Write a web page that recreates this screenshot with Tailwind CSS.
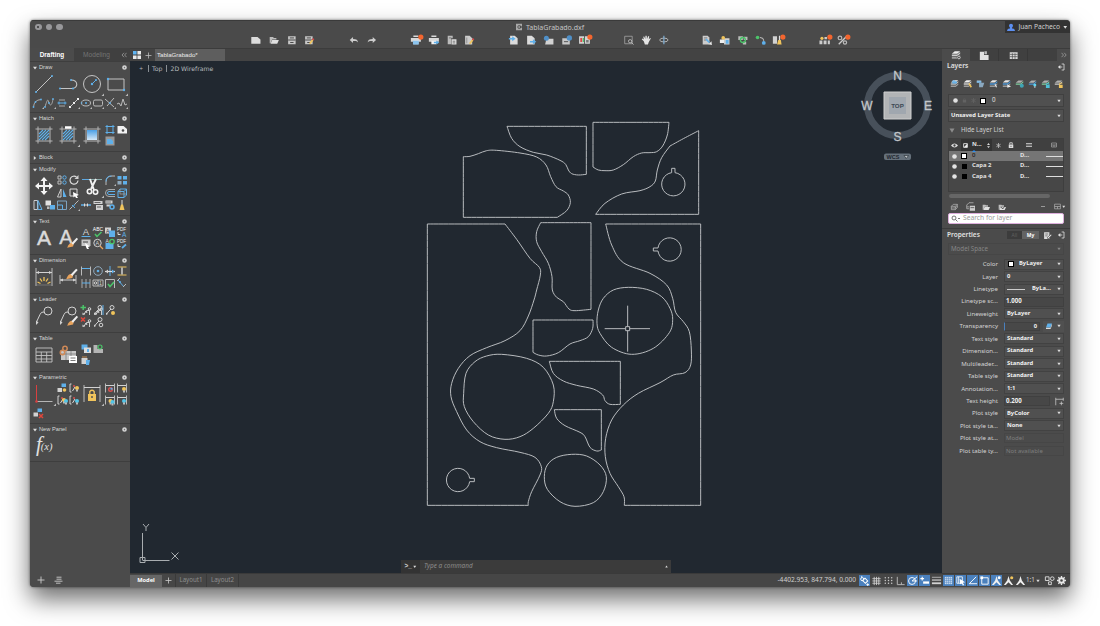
<!DOCTYPE html>
<html lang="en">
<head>
<meta charset="utf-8">
<title>TablaGrabado.dxf</title>
<script src="https://cdn.jsdelivr.net/npm/@tailwindcss/browser@4"></script>
</head>
<body class="w-[1100px] h-[626px] overflow-hidden bg-white pt-[20px] pl-[30px] font-['Liberation_Sans',sans-serif] text-[#d0d0d0]">
<div class="w-[1040px] h-[567px] flex flex-col rounded-[4px] overflow-hidden bg-[#4a4a4a] shadow-[0_12px_24px_rgba(0,0,0,0.58),0_0_3px_rgba(0,0,0,0.55)]">

  <!-- title bar -->
  <header class="h-[28px] shrink-0 flex flex-col border-t border-[#3a3a3a]">
    <div class="h-[12px] flex items-center justify-between">
      <div class="w-[480px] flex gap-[4px] pl-[5px]">
        <span class="size-[6.6px] rounded-full bg-[#98989b] flex items-center justify-center"><span class="size-[2px] rounded-full bg-[#333]"></span></span>
        <span class="size-[6.6px] rounded-full bg-[#98989b]"></span>
        <span class="size-[6.6px] rounded-full bg-[#98989b]"></span>
      </div>
      <div class="flex grow items-center gap-[3px] pl-[5px] font-['Noto_Sans',sans-serif] text-[7px] leading-none text-[#c4c4c4]">
        <svg data-i="doc" class="size-[8px]" viewBox="0 0 12 12"></svg><span>TablaGrabado.dxf</span>
      </div>
      <div class="w-[65px] h-[12px] bg-[#333] flex items-center justify-center gap-[3px] font-['Noto_Sans',sans-serif] text-[6.7px] leading-none text-[#cfcfcf]">
        <svg data-i="user" class="size-[8px]" viewBox="0 0 12 12"></svg><span>Juan Pacheco</span>
        <svg data-i="caret" class="size-[4.500px]" viewBox="0 0 12 12"></svg>
      </div>
    </div>
    <div class="h-[13px] flex items-center pl-[217.1px]">
      <div class="flex mr-[27px]">
        <svg data-i="new" class="w-[17.75px] h-[10px]" viewBox="0 0 12 12"></svg><svg data-i="open" class="w-[17.75px] h-[10px]" viewBox="0 0 12 12"></svg><svg data-i="save" class="w-[17.75px] h-[10px]" viewBox="0 0 12 12"></svg><svg data-i="saveas" class="w-[17.75px] h-[10px]" viewBox="0 0 12 12"></svg>
      </div>
      <div class="flex mr-[26.5px]">
        <svg data-i="undo" class="w-[17.75px] h-[10px]" viewBox="0 0 12 12"></svg><svg data-i="redo" class="w-[17.75px] h-[10px]" viewBox="0 0 12 12"></svg>
      </div>
      <div class="flex mr-[26.5px]">
        <svg data-i="printdot" class="w-[17.75px] h-[10px]" viewBox="0 0 12 12"></svg><svg data-i="printarrow" class="w-[17.75px] h-[10px]" viewBox="0 0 12 12"></svg><svg data-i="pages" class="w-[17.75px] h-[10px]" viewBox="0 0 12 12"></svg><svg data-i="pagepen" class="w-[17.75px] h-[10px]" viewBox="0 0 12 12"></svg>
      </div>
      <div class="flex mr-[26.2px]">
        <svg data-i="import" class="w-[17.75px] h-[10px]" viewBox="0 0 12 12"></svg><svg data-i="export" class="w-[17.75px] h-[10px]" viewBox="0 0 12 12"></svg><svg data-i="cloudopen" class="w-[17.75px] h-[10px]" viewBox="0 0 12 12"></svg><svg data-i="cloudsave" class="w-[17.75px] h-[10px]" viewBox="0 0 12 12"></svg><svg data-i="compare" class="w-[17.75px] h-[10px]" viewBox="0 0 12 12"></svg>
      </div>
      <div class="flex mr-[25.7px]">
        <svg data-i="zoom" class="w-[17.75px] h-[10px]" viewBox="0 0 12 12"></svg><svg data-i="hand" class="w-[17.75px] h-[10px]" viewBox="0 0 12 12"></svg><svg data-i="orbit" class="w-[17.75px] h-[10px]" viewBox="0 0 12 12"></svg>
      </div>
      <div class="flex mr-[28.7px]">
        <svg data-i="xref" class="w-[17.75px] h-[10px]" viewBox="0 0 12 12"></svg><svg data-i="sun" class="w-[17.75px] h-[10px]" viewBox="0 0 12 12"></svg><svg data-i="refresh" class="w-[17.75px] h-[10px]" viewBox="0 0 12 12"></svg><svg data-i="nodes" class="w-[17.75px] h-[10px]" viewBox="0 0 12 12"></svg><svg data-i="brushdot" class="w-[17.75px] h-[10px]" viewBox="0 0 12 12"></svg>
      </div>
      <div class="flex">
        <svg data-i="blockdot" class="w-[17.75px] h-[10px]" viewBox="0 0 12 12"></svg><svg data-i="linkdot" class="w-[17.75px] h-[10px]" viewBox="0 0 12 12"></svg>
      </div>
    </div>
  </header>

  <div class="flex grow min-h-0">
    <!-- tool sets -->
    <aside class="w-[100px] shrink-0 flex flex-col bg-[#4b4b4b] text-[5.7px] leading-none">
      <div class="h-[13px] shrink-0 flex items-center bg-[#404040] text-[6.6px]">
        <span class="w-[44px] h-full flex items-center justify-center bg-[#4b4b4b] font-bold text-white text-[6.4px] pt-px">Drafting</span>
        <span class="w-[45px] text-center text-[#747474] pt-px">Modeling</span>
        <svg class="size-[6px] ml-[2px]" viewBox="0 0 6 6" fill="none" stroke="#aaa" stroke-width=".7"><path d="M3 .8 1 3l2 2.200M5.600.8 3.600 3l2 2.200"/></svg>
      </div>
      <section data-title="Draw" class="h-[51px] shrink-0">
        <div class="grid grid-cols-[repeat(8,12px)] auto-rows-[12px] pl-[2px]">
          <svg data-i="Line" class="col-span-2 row-span-2 size-6" viewBox="0 0 24 24"></svg><svg data-i="Pline" class="col-span-2 row-span-2 size-6" viewBox="0 0 24 24"></svg><svg data-i="Circle" class="col-span-2 row-span-2 size-6" viewBox="0 0 24 24"></svg><svg data-i="Rect" class="col-span-2 row-span-2 size-6" viewBox="0 0 24 24"></svg>
          <svg data-i="arc" class="size-3 mt-[1px]" viewBox="0 0 12 12"></svg><svg data-i="spline" class="size-3 mt-[1px]" viewBox="0 0 12 12"></svg><svg data-i="mline" class="size-3 mt-[1px]" viewBox="0 0 12 12"></svg><svg data-i="ray" class="size-3 mt-[1px]" viewBox="0 0 12 12"></svg><svg data-i="ellipse" class="size-3 mt-[1px]" viewBox="0 0 12 12"></svg><svg data-i="rrect" class="size-3 mt-[1px]" viewBox="0 0 12 12"></svg><svg data-i="xline" class="size-3 mt-[1px]" viewBox="0 0 12 12"></svg><svg data-i="zig" class="size-3 mt-[1px]" viewBox="0 0 12 12"></svg>
        </div>
      </section>
      <section data-title="Hatch" class="h-[39px] shrink-0">
        <div class="grid grid-cols-[repeat(8,12px)] auto-rows-[12px] pl-[2px]">
          <svg data-i="Hatch" class="col-span-2 row-span-2 size-6" viewBox="0 0 24 24"></svg><svg data-i="HatchEdit" class="col-span-2 row-span-2 size-6" viewBox="0 0 24 24"></svg><svg data-i="Gradient" class="col-span-2 row-span-2 size-6" viewBox="0 0 24 24"></svg>
          <svg data-i="boundary" class="size-3" viewBox="0 0 12 12"></svg><svg data-i="wipe" class="size-3" viewBox="0 0 12 12"></svg><svg data-i="region" class="size-3" viewBox="0 0 12 12"></svg>
        </div>
      </section>
      <section data-title="Block" data-closed class="h-[12px] shrink-0"></section>
      <section data-title="Modify" class="h-[52px] shrink-0">
        <div class="grid grid-cols-[repeat(8,12px)] auto-rows-[12.5px] pl-[2px]">
          <svg data-i="Move" class="col-span-2 row-span-2 size-6" viewBox="0 0 24 24"></svg>
          <svg data-i="copy" class="size-3" viewBox="0 0 12 12"></svg><svg data-i="rotate" class="size-3" viewBox="0 0 12 12"></svg>
          <svg data-i="Trim" class="col-span-2 row-span-2 size-6" viewBox="0 0 24 24"></svg>
          <svg data-i="fillet" class="size-3" viewBox="0 0 12 12"></svg><svg data-i="array" class="size-3" viewBox="0 0 12 12"></svg>
          <svg data-i="mirror" class="size-3" viewBox="0 0 12 12"></svg><svg data-i="select" class="size-3" viewBox="0 0 12 12"></svg><svg data-i="offset" class="size-3" viewBox="0 0 12 12"></svg><svg data-i="box" class="size-3" viewBox="0 0 12 12"></svg>
          <svg data-i="stretch" class="size-3" viewBox="0 0 12 12"></svg><svg data-i="pair" class="size-3" viewBox="0 0 12 12"></svg><svg data-i="scale" class="size-3" viewBox="0 0 12 12"></svg><svg data-i="brk" class="size-3" viewBox="0 0 12 12"></svg><svg data-i="join" class="size-3" viewBox="0 0 12 12"></svg><svg data-i="props" class="size-3" viewBox="0 0 12 12"></svg><svg data-i="props2" class="size-3" viewBox="0 0 12 12"></svg><svg data-i="broom" class="size-3" viewBox="0 0 12 12"></svg>
        </div>
      </section>
      <section data-title="Text" class="h-[39px] shrink-0">
        <div class="grid grid-cols-[repeat(8,12px)] auto-rows-[12px] pl-[2px]">
          <svg data-i="TextA" class="col-span-2 row-span-2 size-6" viewBox="0 0 24 24"></svg><svg data-i="TextB" class="col-span-2 row-span-2 size-6" viewBox="0 0 24 24"></svg>
          <svg data-i="ta" class="size-3" viewBox="0 0 12 12"></svg><svg data-i="abc" class="size-3" viewBox="0 0 12 12"></svg><svg data-i="ttop" class="size-3" viewBox="0 0 12 12"></svg><svg data-i="pdfa" class="size-3" viewBox="0 0 12 12"></svg>
          <svg data-i="tfind" class="size-3" viewBox="0 0 12 12"></svg><svg data-i="mag" class="size-3" viewBox="0 0 12 12"></svg><svg data-i="tupd" class="size-3" viewBox="0 0 12 12"></svg><svg data-i="pdfb" class="size-3" viewBox="0 0 12 12"></svg>
        </div>
      </section>
      <section data-title="Dimension" class="h-[39px] shrink-0">
        <div class="grid grid-cols-[repeat(8,12px)] auto-rows-[12px] pl-[2px]">
          <svg data-i="DimA" class="col-span-2 row-span-2 size-6" viewBox="0 0 24 24"></svg><svg data-i="DimB" class="col-span-2 row-span-2 size-6" viewBox="0 0 24 24"></svg>
          <svg data-i="dlin" class="size-3" viewBox="0 0 12 12"></svg><svg data-i="dcir" class="size-3" viewBox="0 0 12 12"></svg><svg data-i="dbrk" class="size-3" viewBox="0 0 12 12"></svg><svg data-i="dspc" class="size-3" viewBox="0 0 12 12"></svg>
          <svg data-i="dcon" class="size-3" viewBox="0 0 12 12"></svg><svg data-i="dtol" class="size-3" viewBox="0 0 12 12"></svg><svg data-i="dchk" class="size-3" viewBox="0 0 12 12"></svg><svg data-i="dobl" class="size-3" viewBox="0 0 12 12"></svg>
        </div>
      </section>
      <section data-title="Leader" class="h-[39px] shrink-0">
        <div class="grid grid-cols-[repeat(8,12px)] auto-rows-[12px] pl-[2px]">
          <svg data-i="LeadA" class="col-span-2 row-span-2 size-6" viewBox="0 0 24 24"></svg><svg data-i="LeadB" class="col-span-2 row-span-2 size-6" viewBox="0 0 24 24"></svg>
          <svg data-i="ladd" class="size-3" viewBox="0 0 12 12"></svg><svg data-i="lal" class="size-3" viewBox="0 0 12 12"></svg><svg data-i="lst" class="size-3 col-span-2" viewBox="0 0 12 12"></svg>
          <svg data-i="lrem" class="size-3" viewBox="0 0 12 12"></svg><svg data-i="lcol" class="size-3" viewBox="0 0 12 12"></svg>
        </div>
      </section>
      <section data-title="Table" class="h-[39px] shrink-0">
        <div class="grid grid-cols-[repeat(8,12px)] auto-rows-[12px] pl-[2px]">
          <svg data-i="TabA" class="col-span-2 row-span-2 size-6" viewBox="0 0 24 24"></svg><svg data-i="TabB" class="col-span-2 row-span-2 size-6" viewBox="0 0 24 24"></svg>
          <svg data-i="tb1" class="size-3" viewBox="0 0 12 12"></svg><svg data-i="tb2" class="size-3 col-span-3" viewBox="0 0 12 12"></svg><svg data-i="tb3" class="size-3" viewBox="0 0 12 12"></svg>
        </div>
      </section>
      <section data-title="Parametric" class="h-[52px] shrink-0">
        <div class="grid grid-cols-[repeat(8,12px)] auto-rows-[12.4px] pl-[2px]">
          <svg data-i="ParA" class="col-span-2 row-span-2 size-6" viewBox="0 0 24 24"></svg>
          <svg data-i="p1" class="size-3" viewBox="0 0 12 12"></svg><svg data-i="p2" class="size-3" viewBox="0 0 12 12"></svg>
          <svg data-i="ParB" class="col-span-2 row-span-2 size-6" viewBox="0 0 24 24"></svg>
          <svg data-i="p5" class="size-3" viewBox="0 0 12 12"></svg><svg data-i="p6" class="size-3" viewBox="0 0 12 12"></svg>
          <svg data-i="p3" class="size-3" viewBox="0 0 12 12"></svg><svg data-i="p4" class="size-3" viewBox="0 0 12 12"></svg><svg data-i="p7" class="size-3" viewBox="0 0 12 12"></svg><svg data-i="p8" class="size-3" viewBox="0 0 12 12"></svg>
          <svg data-i="p9" class="size-3" viewBox="0 0 12 12"></svg>
        </div>
      </section>
      <section data-title="New Panel" class="h-[39px] shrink-0 border-b border-[#3e3e3e]">
        <div class="pl-[6px] font-['Liberation_Serif',serif] italic text-[#e0e0e0] flex items-end"><span class="text-[21px] leading-[20px]">f</span><span class="text-[10.500px] leading-[15px] -ml-[1px]">(x)</span></div>
      </section>
      <div class="mt-auto h-[14px] flex items-center gap-[9px] pl-[7px]">
        <svg class="size-2" viewBox="0 0 8 8" stroke="#ccc" stroke-width=".9"><path d="M4 .5v7M.5 4h7"/></svg>
        <svg class="w-[9px] h-2" viewBox="0 0 9 8" fill="none" stroke="#ccc" stroke-width=".9"><path d="M2.500 1.200h5M2.500 3.200h5M.5 5.200h8M2 7.200h4.500"/></svg>
      </div>
    </aside>

    <div class="flex flex-col grow min-w-0">
      <div class="flex grow min-h-0">
        <!-- drawing area -->
        <main class="w-[812px] flex flex-col">
          <div class="h-[13px] shrink-0 flex items-center bg-[#434343] border-t border-[#3c3c3c]">
            <svg class="size-[8px] ml-[3px]" viewBox="0 0 8 8"><path fill="#5fb4f2" d="M0 0h3.600v3.600H0z"/><path fill="#e8e8e8" d="M4.400 0H8v3.600H4.400zM0 4.400h3.600V8H0zM4.400 4.400H8V8H4.400z"/></svg>
            <svg class="size-[7px] ml-[4px]" viewBox="0 0 7 7" stroke="#bbb" stroke-width=".8"><path d="M3.500.5v6M.5 3.500h6"/></svg>
            <div class="ml-[3px] w-[70px] h-full bg-[#5e5e5e] flex items-center pl-[2px] pt-px text-[6.100px] leading-none text-[#ececec]">TablaGrabado*</div>
          </div>
          <div class="relative grow bg-[#212830]">
            <div class="absolute left-[9px] top-[3px] z-10 flex items-center gap-[4px] text-[6.200px] leading-[9px] text-[#b4b8bc] font-['DejaVu_Sans',sans-serif]">
              <span class="text-[5px] w-[2px]">+</span><span class="w-px h-[7px] bg-[#8a8f94] ml-[3px]"></span><span class="-ml-[1px]">Top</span><span class="w-px h-[7px] bg-[#8a8f94]"></span><span class="-ml-[1px]">2D Wireframe</span>
            </div>
            <svg class="w-[812px] h-[512px] block" viewBox="130 61 812 512" fill="none">
              <g id="drawing" transform="translate(420 110) scale(.33333)" stroke="#b9bcbf" stroke-width="3"></g>
              <!-- UCS icon -->
              <g stroke="#a9adb0" stroke-width="1"><path d="M142.500 533v27M142.500 560.500h27"/><path d="M140 557.500h5v5h-5zM143 524l3 3.500v3.500M149 524l-3 3.500M171.500 552.500l7 7M178.500 552.500l-7 7"/></g>
              <!-- compass -->
              <circle cx="897.500" cy="105.500" r="30" stroke="#47505a" stroke-width="7"/>
              <path fill="#b2b4b6" stroke="#cfcfcf" d="M884 92h27v27h-27z"/><path fill="#a0a7af" d="M889 97h17v17h-17z"/>
              <g font-family="Liberation Sans, sans-serif" text-anchor="middle" fill="#c3c7ca">
                <g font-size="12" stroke="#c3c7ca" stroke-width=".3"><text x="897.500" y="79.500">N</text><text x="897.500" y="140.500">S</text><text x="867" y="110">W</text><text x="928" y="110">E</text></g>
                <text x="897.500" y="107.800" font-size="6.200" fill="#3c4753" font-weight="bold">TOP</text>
                <rect x="884" y="153.500" width="27" height="6.500" rx="2" fill="#66717b"/>
                <text x="893" y="159" font-size="5.500" fill="#1e262e" font-weight="bold">WCS</text>
                <path d="M904 155.500h4.500l-2.250 3z" stroke="#1e262e" stroke-width=".6"/>
              </g>
            </svg>
            <div class="absolute left-[271px] top-[499px] w-[270px] h-[13px] bg-[#3b3b3b] flex items-center text-[6.400px] leading-none text-[#8c8c8c]">
              <span class="w-[19px] h-full bg-[#333] flex items-center justify-center gap-[1px] font-bold text-[6.500px] text-[#ccc]">&gt;_<svg data-i="caret" class="size-[3.500px]" viewBox="0 0 12 12"></svg></span>
              <span class="italic pl-[4px] font-['Noto_Sans',sans-serif]">Type a command</span>
              <svg data-i="caret" class="ml-auto mr-[3px] size-[3px] rotate-180" viewBox="0 0 12 12"></svg>
            </div>
          </div>
        </main>

        <!-- layers and properties -->
        <aside class="w-[128px] shrink-0 flex flex-col bg-[#4b4b4b] font-['Noto_Sans',sans-serif] text-[5.900px] leading-none text-[#e0e0e0]">
          <div class="h-[13px] shrink-0 flex items-center bg-[#404040] border-t border-[#3c3c3c]">
            <span class="w-[28px] h-full flex items-center justify-center bg-[#4b4b4b]"><svg data-i="tlayers" class="size-[10px]" viewBox="0 0 12 12"></svg></span>
            <span class="w-[29px] h-full flex items-center justify-center border-r border-[#383838]"><svg data-i="tblocks" class="size-[10px]" viewBox="0 0 12 12"></svg></span>
            <span class="w-[29px] h-full flex items-center justify-center border-r border-[#383838]"><svg data-i="tgrid" class="size-[9px]" viewBox="0 0 12 12"></svg></span>
            <span class="ml-auto w-[13px] h-full flex items-center justify-center bg-[#4b4b4b]"><svg class="size-[6px]" viewBox="0 0 6 6" fill="none" stroke="#aaa" stroke-width=".7"><path d="M.5.8 2.500 3l-2 2.200M3.200.8l2 2.200-2 2.200"/></svg></span>
          </div>
          <div class="h-[11px] shrink-0 flex items-center justify-between pl-[5px] pr-[5px]"><span class="text-[6.700px] font-semibold">Layers</span><svg data-i="dock" class="size-[8px]" viewBox="0 0 12 12"></svg></div>
          <div class="h-[22px] shrink-0 flex items-center pl-[5.500px]">
            <svg data-i="ly1" class="w-[13.070px] h-[9px]" viewBox="0 0 12 12"></svg><svg data-i="ly2" class="w-[13.070px] h-[9px]" viewBox="0 0 12 12"></svg><svg data-i="ly3" class="w-[13.070px] h-[9px]" viewBox="0 0 12 12"></svg><svg data-i="ly4" class="w-[13.070px] h-[9px]" viewBox="0 0 12 12"></svg><svg data-i="ly5" class="w-[13.070px] h-[9px]" viewBox="0 0 12 12"></svg><svg data-i="ly6" class="w-[13.070px] h-[9px]" viewBox="0 0 12 12"></svg><svg data-i="ly7" class="w-[13.070px] h-[9px]" viewBox="0 0 12 12"></svg><svg data-i="ly8" class="w-[13.070px] h-[9px]" viewBox="0 0 12 12"></svg><svg data-i="ly9" class="w-[13.070px] h-[9px]" viewBox="0 0 12 12"></svg>
          </div>
          <div class="mx-[6px] h-[13px] shrink-0 flex items-center border border-[#404040] bg-[#505050] px-[2px]">
            <svg data-i="disc" class="size-[5px] ml-[2px]" viewBox="0 0 12 12"></svg><svg data-i="lockdim" class="size-[5px] ml-[4px]" viewBox="0 0 12 12"></svg><svg data-i="snowdim" class="size-[5px] ml-[4px]" viewBox="0 0 12 12"></svg>
            <span class="size-[6px] bg-white border border-black ml-[4px]"></span><span class="ml-[6px] text-[6.200px]">0</span>
            <svg data-i="caret" class="ml-auto size-[4px]" viewBox="0 0 12 12"></svg>
          </div>
          <div class="mx-[6px] mt-[2px] h-[13px] shrink-0 flex items-center border border-[#404040] bg-[#505050] px-[2px] font-bold text-[5.800px] text-[#f0f0f0]">
            <span>Unsaved Layer State</span><svg data-i="caret" class="ml-auto size-[4px]" viewBox="0 0 12 12"></svg>
          </div>
          <div class="h-[16px] shrink-0 flex items-center pl-[7px] text-[6.200px] text-[#d0d0d0]">
            <svg class="w-[6px] h-[5px] mr-[6px]" viewBox="0 0 6 5"><path fill="#8c8c8c" d="M.5.5h5L3 4.800z"/></svg>Hide Layer List
          </div>
          <div class="mx-[6px] h-[54px] shrink-0 flex flex-col bg-[#474747] border border-[#3e3e3e] font-bold">
            <div class="h-[12px] shrink-0 flex items-center bg-[#404040]">
              <svg data-i="eye" class="size-[7px] ml-[2px]" viewBox="0 0 12 12"></svg>
              <span class="ml-[3px] w-[31px] h-full bg-[#333] flex items-center gap-[4px] pl-[2px] relative"><svg data-i="half" class="size-[5px]" viewBox="0 0 12 12"></svg><span>N...</span><svg data-i="sort" class="size-[5px]" viewBox="0 0 12 12"></svg><span class="absolute left-[11px] bottom-[-1px] border-x-[2px] border-b-[2px] border-x-transparent border-b-[#2a8df0]"></span></span>
              <svg data-i="snow" class="size-[5px] ml-[4px]" viewBox="0 0 12 12"></svg><svg data-i="lock" class="size-[6px] ml-[7px]" viewBox="0 0 12 12"></svg>
              <svg data-i="bars" class="size-[6px] ml-[12px]" viewBox="0 0 12 12"></svg><svg data-i="barsdim" class="size-[6px] ml-[19px]" viewBox="0 0 12 12"></svg>
            </div>
            <div class="h-[10.200px] shrink-0 flex items-center bg-[#757575]"><svg data-i="disc" class="size-[5px] ml-[3px]" viewBox="0 0 12 12"></svg><span class="size-[6px] bg-white border border-black ml-[4px]"></span><span class="ml-[5px] w-[48px] font-normal text-black">0</span><span>D...</span><span class="ml-auto w-[17px] h-px bg-[#ddd]"></span></div>
            <div class="h-[10.200px] shrink-0 flex items-center"><svg data-i="disc" class="size-[5px] ml-[3px]" viewBox="0 0 12 12"></svg><span class="size-[5px] bg-black ml-[5px]"></span><span class="ml-[5px] w-[48px]">Capa 2</span><span>D...</span><span class="ml-auto w-[17px] h-px bg-[#ddd]"></span></div>
            <div class="h-[10.200px] shrink-0 flex items-center"><svg data-i="disc" class="size-[5px] ml-[3px]" viewBox="0 0 12 12"></svg><span class="size-[5px] bg-black ml-[5px]"></span><span class="ml-[5px] w-[48px]">Capa 4</span><span>D...</span><span class="ml-auto w-[17px] h-px bg-[#ddd]"></span></div>
          </div>
          <div class="ml-[6.500px] mt-[2px] w-[101px] h-[4px] shrink-0 rounded-full bg-[#666]"></div>
          <div class="h-[15px] shrink-0 flex items-center pt-[2px] pl-[8px] pr-[3px]">
            <svg data-i="slayers" class="size-[8px]" viewBox="0 0 12 12"></svg><svg data-i="lygrp" class="size-[9px] ml-[8px]" viewBox="0 0 12 12"></svg><svg data-i="open" class="size-[8px] ml-[7px]" viewBox="0 0 12 12"></svg><svg data-i="folderv" class="size-[8px] ml-[8px]" viewBox="0 0 12 12"></svg>
            <span class="ml-auto w-[4px] h-px bg-[#999] mr-[9px]"></span><svg data-i="barsdim" class="size-[7px]" viewBox="0 0 12 12"></svg><svg data-i="caret" class="ml-[1px] mr-[2px] size-[3.500px]" viewBox="0 0 12 12"></svg>
          </div>
          <div class="mx-[6px] h-[11px] shrink-0 flex items-center rounded-[2px] bg-white border border-[#dcaedb] px-[2px] text-[6.700px] text-[#9a9a9a]">
            <svg class="w-[10px] h-[7px]" viewBox="0 0 10 7" fill="none" stroke="#555" stroke-width=".8"><circle cx="3" cy="3" r="2"/><path d="m4.500 4.500 2 2M7 3l1 1 1-1"/></svg><span class="ml-[2px]">Search for layer</span>
          </div>
          <div class="mt-[4px] h-[13px] shrink-0 flex items-center border-t border-[#3c3c3c] pl-[5px] pr-[5px]">
            <span class="text-[6.500px] font-semibold">Properties</span>
            <span class="ml-auto w-[15px] h-[8px] bg-[#3c3c3c] text-[#606060] text-center text-[5px] leading-[8px]">All</span><span class="w-[17px] h-[8px] bg-[#636363] text-white text-center text-[5px] leading-[8px] font-bold">My</span>
            <svg data-i="propedit" class="size-[9px] ml-[4px]" viewBox="0 0 12 12"></svg><svg data-i="dock" class="size-[8px] ml-[5px]" viewBox="0 0 12 12"></svg>
          </div>
          <div class="mx-[6px] mt-[2px] h-[12px] shrink-0 flex items-center border border-[#464646] px-[2px] text-[6.200px] text-[#868686]"><span>Model Space</span><svg data-i="caretdim" class="ml-auto size-[4px]" viewBox="0 0 12 12"></svg></div>
          <div id="props" class="mt-[3px]"></div>
        </aside>
      </div>

      <!-- status bar -->
      <footer class="h-[14px] shrink-0 flex items-center bg-[#464646] border-t border-[#3a3a3a] font-['Noto_Sans',sans-serif] text-[6.200px] leading-none">
        <span class="w-[32px] h-[12px] flex items-center justify-center bg-[#666] font-bold text-white text-[5.700px]">Model</span>
        <svg class="size-[7px] ml-[3px]" viewBox="0 0 7 7" stroke="#ccc" stroke-width=".8"><path d="M3.500.5v6M.5 3.500h6"/></svg>
        <span class="ml-[3px] w-[32px] h-full border-x border-[#3a3a3a] flex items-center justify-center text-[#8e8e8e] pb-px">Layout1</span>
        <span class="w-[32px] h-full border-r border-[#3a3a3a] flex items-center justify-center text-[#8e8e8e] pb-px">Layout2</span>
        <span class="ml-auto mr-[2px] pb-px text-[6.600px] text-[#cfcfcf]">-4402.953, 847.794, 0.000</span>
        <svg data-i="s1" class="size-[11px] mx-[.5px] bg-[#4a80bd]" viewBox="0 0 12 12"></svg><svg data-i="s2" class="size-[11px] mx-[.5px]" viewBox="0 0 12 12"></svg><svg data-i="s3" class="size-[11px] mx-[.5px]" viewBox="0 0 12 12"></svg><svg data-i="s4" class="size-[11px] mx-[.5px]" viewBox="0 0 12 12"></svg><svg data-i="s5" class="size-[11px] mx-[.5px] bg-[#4a80bd]" viewBox="0 0 12 12"></svg><svg data-i="s6" class="size-[11px] mx-[.5px] bg-[#4a80bd]" viewBox="0 0 12 12"></svg><svg data-i="s7" class="size-[11px] mx-[.5px]" viewBox="0 0 12 12"></svg><svg data-i="s8" class="size-[11px] mx-[.5px] bg-[#4a80bd]" viewBox="0 0 12 12"></svg><svg data-i="s9" class="size-[11px] mx-[.5px] bg-[#4a80bd]" viewBox="0 0 12 12"></svg><svg data-i="s10" class="size-[11px] mx-[.5px] bg-[#4a80bd]" viewBox="0 0 12 12"></svg><svg data-i="s11" class="size-[11px] mx-[.5px] bg-[#4a80bd]" viewBox="0 0 12 12"></svg><svg data-i="s12" class="size-[11px] mx-[.5px] bg-[#4a80bd]" viewBox="0 0 12 12"></svg><svg data-i="s13" class="size-[11px] mx-[.5px]" viewBox="0 0 12 12"></svg><svg data-i="s14" class="size-[11px] mx-[.5px]" viewBox="0 0 12 12"></svg>
        <span class="w-[9px] text-[#cfcfcf]">1:1</span><svg data-i="caret" class="ml-[1px] size-[4px]" viewBox="0 0 12 12"></svg>
        <svg data-i="s15" class="size-[11px] ml-[4px]" viewBox="0 0 12 12"></svg><svg data-i="gear" class="size-[9px] ml-[2px] mr-[4px]" viewBox="0 0 12 12"></svg>
      </footer>
    </div>
  </div>
</div>

<script>
const W = '#d2d2d2', B = '#5fb0ea', Y = '#f0c45c', G = '#4cc46a';
const ln = (d, c = W, w = 1) => `<path d="${d}" fill="none" stroke="${c}" stroke-width="${w}"/>`;
const fl = (d, c = W) => `<path d="${d}" fill="${c}"/>`;
const ci = (x, y, r, c = W) => `<circle cx="${x}" cy="${y}" r="${r}" fill="${c}"/>`;
const ring = (x, y, r, c = W, w = 1) => `<circle cx="${x}" cy="${y}" r="${r}" fill="none" stroke="${c}" stroke-width="${w}"/>`;
const tx = (t, x, y, s, c = W, e = '') => `<text x="${x}" y="${y}" font-size="${s}" fill="${c}" font-family="Liberation Sans, sans-serif" ${e}>${t}</text>`;
const dot = ci(12, 2.500, 3.100, '#f4662f');
const more = fl('M24 24h-2.500l2.500-2.500z', '#bbb'), more2 = fl('M12 12h-2l2-2z', '#bbb');
const floppy = fl('M1.500 1.500h9v9.500h-9z', '#c8c8c8') + ln('M3.500 3.500h5M1.500 6h9M4 9h4', '#4b4b4b', 1.200);
const printer = fl('M3 .5h6v2H3zM0 3.500h12V8H0z', '#d8d8d8') + fl('M3 7h6v4H3z', '#f2f2f2');
const page = fl('M1.500 1h5.500l3.500 3v7.500h-9z', '#dcdcdc');
const folder = fl('M1 2.500h4l1 1h3v2H4L2 10H1z', '#bdbdbd') + fl('M4 6h8l-2 4.500H2z', '#e0e0e0');
const pen = ln('M7 10.500l3.500-4.500', Y, 2.200) + ln('M10.500 6l1.200-1.600', '#d94a4a', 2.200);
const layer = (a, b) => fl('M1 4.500 4.500 1.500H11L7.500 4.500z', a) + fl('M1 5.500h6.500L11 2.500v2L7.500 7.500H1z', b) + fl('M1 8.500h6.500L11 5.500v2L7.500 10.500H1z', '#9c9c9c');
const sheet = c => fl('M1 5 4.500 2H11L7.500 5z', '#b0b0b0') + fl('M1 6h6.500L11 3v1.500L7.500 7.500H1z', c);
const brush = (s = 1) => `<g transform="translate(${s > 1 ? 12 : 6} ${s > 1 ? 12 : 6}) scale(${s})">` + fl('M-.5 5.700C.8 2.500 2 2.500 3.500 3L3 5z', '#e8a35c') + ln('M2.500 3.500 5.500.2', '#eee', 1.200) + '</g>';
const bulb = (x, y, c) => ci(x, y, 2, c) + fl(`M${x - 1} ${y + 1.500}h2v2h-2z`, '#bbb');
const frame24 = ln('M3.500 6h17M3.500 18h17M6 3.500v17M18 3.500v17', '#b5b5b5');
const hatch = ln('M7 11l4-4M7 14l7-7M7 17l10-10M10 17l7-7M13 17l4-4', B, 1.100);
const leader = ring(8, 3.500, 2) + ln('M7 5 5 7 2.500 10') + fl('M2 11V8.500L4 10z');
const arrows = ln('M4 10.500l2-3.500 4-1M6 7l1 2', '#ddd') + ring(9.500, 5, 1.300) + ln('M9.500 6.500V11', '#ccc') + fl('M2.500 11V8.500L5 10.500z');
const dim = (c = W) => ln('M1.500 1.500v9M10.500 1.500v9', '#bbb') + ln('M2 3.500h8', c);
const cons = ln('M3.500 2H2v8h1.500') + ln('M4.500 9 7 5', '#ddd') + ci(6, 4, 1, '#d84f4f');
const comp = fl('M6 1 7.500 6 11 11H9L6 8 3 11H1L4.500 6z', '#eee');
const snow = c => ln('M6 0v12M1 3l10 6M11 3 1 9', c, 2);
const icons = {
  caret: fl('M1 2.500h10L6 10z', '#ddd'), caretdim: fl('M1 2.500h10L6 10z', '#888'), disc: ci(6, 6, 5.500, '#e2e2e2'),
  doc: fl('M1.500 1h9v10h-9z', '#a9a9a9') + ring(6.500, 6, 2.300, '#444', 1.200) + fl('M7 5h3v2H7z', '#444'),
  user: ci(6, 4, 3, '#5c8ff0') + fl('M4.500 6h3v3h-3zM0 12c0-3 3-4 6-4s6 1 6 4z', '#5c8ff0'),
  new: fl('M.5 2.500H8l3.500 3V10.500H.5z', '#dcdcdc'), open: folder, save: floppy, saveas: floppy + pen,
  undo: fl('M1 6l4-3.500v2.200c4 0 6 1.300 6 4.300C10 7.300 8 7 5 7.200V9.500z', '#ccc'),
  redo: fl('M11 6 7 2.500v2.200C3 4.700 1 6 1 9c1-1.700 3-2 6-1.800V9.500z', '#ccc'),
  printdot: printer + fl('M2.500 7h7v4.500h-7z', '#8cc4ee') + dot, printarrow: printer + ln('M6 9h4', B, 1.700) + fl('M9 6.500 12.500 9 9 11.500z', B),
  pages: fl('M1 1h6v3H5v7H1z', '#bbb') + fl('M5.500 5H11.500v6.500h-6z', '#ddd') + ln('M7 7.500h3M7 9.500h3', '#555', .8) + ln('M2.500 3.500h3', '#555', .8),
  pagepen: fl('M1.500 1h5.500l3 3v7.500h-8.500z', '#ccc') + ln('M3.500 3v7', '#777', .8) + pen,
  import: page + ln('M0 4.500h5', B, 1.700) + fl('M4 1.500 8 4.500 4 7.500z', B), export: page + ln('M5 8h4', B, 1.700) + fl('M8.500 5 12.500 8l-4 3z', B),
  cloudopen: fl('M3 4.500h8.500v7H1.500z') + ci(3, 4, 3, '#4f8fc7'), cloudsave: fl('M.5 4h9v7.500h-9z', '#c8c8c8') + ln('M2.500 8h5', '#555', 1.200) + ci(9, 3.500, 3.200, '#4f8fc7'),
  compare: fl('M-1 1.500h6v9h-6zM6 1.500h6v9H6z') + fl('M.5 3.500h2.300v5H.5z', '#d94a4a') + fl('M3.500 3.500H5v5H3.500z', G) + fl('M7.500 6H10.500v3h-3z', '#777') + dot,
  zoom: ln('M1 1.500h9v9H1z', '#aaa', .9) + ring(7.500, 7.500, 2, '#ccc', .9) + ln('M9 9l2.500 2.500', '#ccc', 1),
  hand: fl('M3.500 7.500 1 5l1.200-.8 1.500 1.300L2.800 2.200l1.200-.4 1.300 3L5.500.8H7l.3 4L8.800 1.300l1.200.4L9.500 5.300l1.500-1.700 1 .700L9.500 8.500 8.500 11.500H4.800z', '#e4e4e4'),
  orbit: `<ellipse cx="6" cy="6" rx="5" ry="2.300" fill="none" stroke="#bbb" stroke-width="1.100"/>` + ln('M6 1v10', '#7fb0d8', 1.400),
  xref: fl('M1 1h6l2 2v8.500H1z', '#ccc') + ln('M2.500 3.500h4M2.500 6h3', '#555', .8) + ln('M5 5l4 4', B, 2) + fl('M12 12 8 11l3.500-3.500z', '#eee'),
  sun: fl('M5 4h6.500v7.500H5z') + fl('M7 6h3.500v4.500H7z', B) + ci(4, 3.500, 2.200, Y) + fl('M0 5.500h5v4H0z', '#eee'),
  refresh: fl('M.5 1.500H6V6H.5zM7 2h4.500v4H7zM6 8h4v3.500H6z', '#bbb') + ring(6, 6, 3, G, 1.600),
  nodes: ci(2, 3, 2.200, G) + ln('M5 3q4.500 0 4.500 4', '#ddd') + ci(9.500, 9.500, 2.300, B),
  brushdot: fl('M0 1.500h5v9H0z') + ln('M8 1v6', '#ddd', 1.500) + fl('M6.500 6h3l1 5.500H5z', Y) + dot,
  blockdot: fl('M-.5 6.500h3.500v4.500h-3.500zM4.500 6.500H8V11H4.500zM9.500 6.500H12V11H9.500z', '#ccc') + ci(2.500, 4, 1.900, Y) + fl('M5.500 2.500h3v2.500h-3z', '#ccc') + dot,
  linkdot: ring(2.500, 3.500, 2.200, '#bbb', 1.400) + ring(8.500, 9, 2, '#bbb', 1.400) + ln('M1 11 10 2', '#ccc', 1.600) + dot,
  Line: ln('M4 20 20 4', '#c4c4c4') + ci(4, 20, 1, B) + ci(20, 4, 1, B),
  Pline: ln('M4 16.500h12c6.500 0 6.500-8.500-1-8.500', '#c4c4c4', 1.100) + ci(4, 16.500, 1, B) + ci(17, 16.500, 1, B) + ci(15, 8, 1, B),
  Circle: ring(12, 12, 8.500, '#c4c4c4') + ln('M12 12l4-4', B) + ci(12, 12, 1.200, B) + ci(16, 8, 1, B) + more,
  Rect: ln('M4 7h16v11H4z', '#c4c4c4') + ci(4, 7, 1.200, B) + ci(20, 18, 1.200, B) + more,
  arc: ln('M1.500 10Q2 3 9 2.500', '#aaa') + ci(1.500, 10, .9, B) + ci(3.500, 5, .9, B) + ci(9, 2.500, .9, B) + more2,
  spline: ln('M1 10C4 0 4 3 5 6S8 9 9 2', '#aaa') + ci(1, 10, .9, B) + ci(5, 6, .9, B) + ci(9, 2, .9, B) + more2,
  mline: ln('M3 3h6M3 9h6', '#a8a8a8') + ln('M1.500 6h9M3 4.500v3M9 4.500v3', B),
  ray: ln('M2 10l8-8', '#ccc') + fl('M1 9h2v2H1zM5 5h2v2H5zM9 1h2v2H9z', '#eee') + more2,
  ellipse: `<ellipse cx="6" cy="6" rx="4.500" ry="3" fill="none" stroke="#bbb"/>` + ci(6, 6, 1, B) + ci(1.500, 6, .8, B) + more2,
  rrect: `<rect x="1.500" y="3" width="9" height="6" rx="1.500" fill="none" stroke="#bbb"/>` + more2,
  xline: ln('M1 2l9 8M10 1 3 9', '#bbb') + ci(6, 6, .9, B) + more2, zig: ln('M1 7l2-1 2 3 2-7 2 6 2-1', '#bbb') + more2,
  Hatch: frame24 + hatch, HatchEdit: frame24 + hatch + ln('M9 4.500h6.500', '#fff', 2.500) + more,
  Gradient: '<defs><linearGradient id="gr" x2="0" y2="1"><stop stop-color="#4a9fe6"/><stop offset="1" stop-color="#d5e8f8"/></linearGradient></defs>' + frame24 + fl('M7 7h10v10H7z', 'url(#gr)'),
  boundary: ln('M1.500 3.500h9M1.500 9.500h9M3 2v9M9 2v9', B), wipe: fl('M1.500 3h6l3.500 3v4.500H1.500z', '#f2f2f2') + ci(7, 7.500, 1.300, '#4b4b4b'),
  region: fl('M1.500 1.500h9v9h-9z', '#999') + fl('M3 4h4l2 2v3H3z', B),
  Move: fl('M12 3l3.500 4H13v4h4V8.500L21 12l-4 3.500V13h-4v4h2.500L12 21l-3.500-4H11v-4H7v2.500L3 12l4-3.500V11h4V7H8.500z', '#f4f4f4'),
  copy: ln('M2 2h3v3H2zM2 7h3v3H2z', '#bbb') + ring(8.500, 3.500, 1.700, B) + ring(8.500, 8.500, 1.700, B), rotate: ln('M8.500 3A4 4 0 1 0 10 6.500', '#ddd', 1.200) + fl('M10.500 1v4h-4z'),
  Trim: ln('M2 5.500h7', '#5fa8df', 1.200) + ln('M9 5.500h13', '#8aa', 1) + ln('M10 5l4 11M16 5l-5 10', '#f2f2f2', 1.900) + ring(9.500, 17.500, 2.200, '#f2f2f2', 1.600) + ring(15.500, 18, 2.200, '#f2f2f2', 1.600) + more,
  fillet: ln('M2 11V8Q2 2 8 2h3', '#bbb') + ln('M2 7.500Q2 2 7.500 2', B) + more2, array: fl('M1.500 2h4v3.500h-4zM7 2h4v3.500H7zM7 7h4v3.500H7z', B) + fl('M1.500 7h4v3.500h-4z', '#8fa9bd'),
  mirror: ln('M5 2v8H1.500z', '#ccc') + fl('M7 2v8h3.500z', B), select: ln('M2 2h7v7H2z', '#ddd') + fl('M5 5l6 3-2.500.5L10 11H8L7 9l-1.500 1.500z', '#fff'),
  offset: ln('M11 2.500H5a3.500 3.500 0 0 0 0 7h6', '#aaa') + ln('M11 4.500H5a1.500 1.500 0 0 0 0 3h6', B), box: ln('M2 4.500h6v6H2zM2 4.500l2-2.500h6.500L8 4.500M10.500 2v6L8 10.500', B) + ln('M4 2v5h6', '#aaa', .7),
  stretch: ln('M2 1.500h3.500v9H2z', '#ccc') + ln('M6 1.500l4 9H6z', B), pair: fl('M1.500 1.500h5.500v5h-5.500z', '#e0e0e0') + fl('M6 6h5v4.500H6z', B) + fl('M3 7.500h2.500V10H3z', '#bbb'),
  scale: ln('M1.500 2h9v8.500h-9z', '#7fa3c0') + ln('M1.500 6h5v4.500', B), brk: ln('M1.500 10.500l3-3M7 5l3.500-3.500', '#bbb') + ln('M4 6l3 3M5 8l2-3', B) + more2,
  join: ln('M1 6h3.500M7.500 6H11', B, 1.400) + fl('M4 4l2 2-2 2zM8 4 6 6l2 2z', '#ddd'),
  props: fl('M1.500 2h9v3h-9zM4 6h7v5H4z') + ln('M2.500 3.500h6M5 8h4', '#444', .8), props2: fl('M1.500 1.500h7v3h-7zM2.500 5.500h4v2h-4z') + ring(8, 8, 2, B, 1.500) + ln('M2 3h5', '#555', .7),
  broom: ln('M6 1v5', '#ddd') + fl('M5 5.500h2L8.500 11h-5z', Y),
  TextA: tx('A', 12, 19, 21, '#dadada', 'text-anchor="middle" stroke="#dadada" stroke-width=".5"'), TextB: tx('A', 10, 18, 20, '#dadada', 'text-anchor="middle" stroke="#dadada" stroke-width=".4"') + brush(1.700),
  ta: tx('A', 6, 9, 9.500, W, 'text-anchor="middle"') + ln('M1.500 10.500h9', B), abc: tx('ABC', 6, 5, 5, '#fff', 'text-anchor="middle"') + ln('M3 8l2 2.500L9.500 6', G, 1.500),
  ttop: fl('M1 1.500h6v6H1z') + fl('M5 4.500h6V11H5z', B) + tx('A', 2, 6.500, 5, '#444'), pdfa: tx('PDF', 1, 4.500, 4.500, '#eee') + tx('A', 6, 11, 6.500, B) + ln('M2 6v2.500h2.500', '#ddd'),
  tfind: fl('M1.500 1.500h9V8h-9z', '#c8c8c8') + ln('M3 4h5', '#444') + fl('M5 5l5 3.500-2 .5 1 2H7L6 9z', '#fff'), mag: ring(5.500, 5, 3.700) + ln('M8 8l3 3', '#e8a35c', 1.300) + tx('A', 3.500, 7, 5.500),
  tupd: fl('M1.500 5h8v6h-8z', B) + ring(8, 3.500, 2.200, G, 1.300) + tx('A', 1.500, 5, 5, '#ddd'), pdfb: tx('PDF', 1, 4.500, 4.500, '#eee') + ln('M6 10l4-3.500', B, 1.700) + ln('M2 6v2.500h2.500', '#ddd'),
  DimA: ln('M4 3v18M20 3v18', '#bbb') + ln('M4 7.500h16') + fl('M4 7.500l3-1.500v3zM20 7.500l-3-1.500v3z') + ln('M12 12v4M8 13.500l2 3M16 13.500l-2 3M5.500 17l3 1.500M18.500 17l-3 1.500', Y, 1.300) + ln('M4 20h16', '#888', .7),
  DimB: ln('M4 10v9M20 10v9', '#bbb') + ln('M4 15h16') + fl('M4 15l3-1.500v3zM20 15l-3-1.500v3z') + `<g transform="translate(-1 -8)">${brush(1.800)}</g>`,
  dlin: dim(B), dcir: ring(6, 6, 4.300, '#8fa9bd') + ci(6, 6, 1.300, B), dbrk: ln('M6 1v10', B) + ln('M1 6.500h10', '#ddd', 1.200) + fl('M4 4.500v4L1.500 6.500z') + fl('M8 4.500v4l2.500-2z', B), dspc: ln('M1.500 2h9M1.500 10h9', Y) + ln('M6 2.500v7', '#ddd', 1.400),
  dcon: ln('M2 2v9M6 2v9M10 2v9', '#aaa') + ln('M2 6h8', B), dtol: ln('M1 3h10v6H1zM6 3v6', '#bbb') + ring(3.500, 6, 1.200) + tx('1', 7, 8, 5), dchk: ln('M1.500 11V2.500h9V11', '#bbb') + ln('M4 7l2 2.500L10 5', G, 1.500), dobl: ln('M2 3l6 7', B) + ln('M1 4l3-3M7 10l3-3', '#bbb') + ci(4, 5, 1, B),
  LeadA: ring(16, 7, 4) + ln('M12 8Q9 7.500 8 10.500L4.500 18') + fl('M4 21v-4.500l2.500 2z'), LeadB: ring(16, 7, 4) + ln('M12 8Q9 7.500 8 10.500L4.500 18') + fl('M4 21v-4.500l2.500 2z') + brush(1.700),
  ladd: arrows + ln('M.5 3.500H6M3.200 1v5', G, 1.500), lal: leader + arrows + ln('M11 1v10', B), lst: leader + ci(9, 9, 2, Y),
  lrem: arrows + ln('M1 1.500l4 4M5 1.500l-4 4', '#e0473c', 1.500), lcol: leader + ring(9, 9, 1.800),
  TabA: ln('M4 5h16v14H4zM4 9h16M4 12.500h16M4 16h16M9.300 9v10M14.700 9v10', '#c4c4c4', .9),
  TabB: fl('M5 8h15v9H5z', '#c8c8c8') + ln('M5 11h15M10 8v9M15 8v9', '#666', .6) + ring(6.500, 9.500, 2.200, '#d08a58', 1.500) + ring(9, 5.500, 2.200, '#d08a58', 1.500) + fl('M13 13h8v7h-8z', '#fff') + ln('M14.500 15h5M14.500 17.500h5', '#555', .8),
  tb1: fl('M1.500 1.500h6v5h-6z', B) + fl('M4 4.500h7V10H4z', '#ddd') + fl('M7 6h2v3H7z', B), tb2: fl('M1.500 2h4v8h-4zM4 6h7v4H4z', '#b4b4b4') + ring(8, 4, 2, G, 1.200), tb3: fl('M1.500 3h6v6h-6z') + fl('M6 5h4l-1 5H6z', B) + ln('M2 2h5', '#c78c52'),
  ParA: ln('M4.500 3v17', '#d84040') + ln('M4.500 19.500h16', '#b5b5b5') + ci(4.500, 19.500, 1.300, '#d84040') + more,
  ParB: ln('M4 3v17M20 3v17', '#bbb') + ln('M4 5.500h16') + fl('M8 12h8v7H8z', Y) + ln('M9.800 12V9.500q2.200-2.500 4.400 0V12', Y, 1.300) + ci(12, 15, 1, '#555') + more,
  p1: fl('M5.500 1.500H10V5H5.500z', B) + fl('M1.500 6H6v4H1.500z') + ci(8.500, 8, 1.800, Y), p2: cons + bulb(9, 6, Y), p3: cons + bulb(8, 6, Y) + bulb(10, 7, '#52c5e8'), p4: cons + bulb(9, 7, '#52c5e8'),
  p5: dim() + ring(6.500, 7.500, 1.800, '#d84f4f', 1.400) + fl('M6.500 5.700h2v2h-2z', B), p6: dim() + bulb(8, 7, Y), p7: dim() + bulb(6.500, 7, Y) + bulb(8.500, 8, '#52c5e8'), p8: dim() + bulb(8, 7, '#52c5e8'),
  p9: fl('M5.500 1.500H10V5H5.500z', B) + fl('M1.500 5.500H6v4H1.500z') + ln('M7 7l4 4M11 7l-4 4', '#e0473c', 1.500),
  tlayers: layer('#eee', '#ccc') + ci(9.500, 9, 2.600, '#4b4b4b') + ring(9.500, 9, 1.600, '#ddd'), tblocks: fl('M1 2h5v4h5.500v6H1z', '#e2e2e2') + fl('M6.500 1.500h3V5h-3z', '#bbb'), tgrid: fl('M1 1.500h10.500v9H1z', '#d8d8d8') + ln('M1 4.500h10.500M1 7.500h10.500M4.500 3v7.500M8 3v7.500', '#4b4b4b', .9),
  dock: ln('M7 1.500h3.500v9H7M8 6H2.500', '#e0e0e0', 1.200) + fl('M5 3v6L1.500 6z', '#e0e0e0'),
  ly1: layer('#eee', '#bbb') + fl('M3 3h6v3H3z', B) + ci(5, 3, 1.800, '#7fb7e0'), ly2: layer('#eee', '#ccc') + ln('M8 6l3 5', Y, 2), ly3: fl('M1 2h6v3H1z', '#a9c8e0') + fl('M4 5h7l-2 6H4z', '#8aa8bf') + ln('M1 4h6', B, 1.500), ly4: layer('#e6e6e6', '#4d94d0') + ln('M8 7l2 4', '#eee', 1.500), ly5: layer('#e6e6e6', '#4d94d0') + fl('M7 7l5 3-5 1.500z', '#eee'),
  ly6: sheet('#7fd0a0') + ci(9, 9, 2.700, '#3fa5b5'), ly7: sheet('#4d94d0') + bulb(9, 8, '#5fd4f0'), ly8: sheet('#7fd0a0') + fl('M6.500 7.500h5V12h-5z', '#4fc0d8') + ln('M7.500 8V6h3v2', '#4fc0d8'), ly9: sheet('#ccc') + fl('M6.500 7.500h5V12h-5z', Y) + ln('M7.500 8V5.500h3v1', Y),
  lockdim: fl('M2 5h8v6H2z', '#636363') + ln('M4 5V2h4v3', '#636363', 1.500), snowdim: snow('#636363'), lock: fl('M1.500 5h9v7h-9z', '#ddd') + ln('M3.500 5V1.500h5V5', '#ddd', 1.700) + ci(6, 8.500, 1.200, '#444'),
  eye: fl('M0 6q6-6.500 12 0-6 6.500-12 0z', '#ddd') + ci(6, 6, 2, '#444'), half: ln('M1.500 1.500h9v9h-9z', '#eee', 2) + fl('M10 2v8H2z', '#eee'), sort: fl('M6 0l3.500 4.500h-7zM6 12 2.500 7.500h7z', '#ddd'),
  snow: snow('#bbb'), bars: ln('M0 3.500h12M0 8.500h12', '#ddd', 2), barsdim: ln('M1 2h10v8H1zM1 6h10M6 6v4', '#aaa', 1.300),
  slayers: ln('M2 5 5 2h6L8 5zM2 5v5h6V5M8 10l3-3V2M2 7.500h6l3-3', '#bbb', 1), lygrp: ln('M1 4 4 1h6M1 4v5h3M1 6.500h3', '#bbb') + fl('M5 5h7v6.500H5z', '#ccc') + ln('M6 7.500h5', '#444'), folderv: folder + ln('M5 6l2 3 3-4', '#444', 1.300),
  propedit: fl('M1.500 1.500h7v9h-7z', '#ddd') + ln('M3 4h4M3 6.500h3', '#555') + ln('M6 10l5-5', '#4b4b4b', 2.600) + ln('M6.500 9.500l4.500-4.500', '#eee', 1.400),
  s1: ln('M6.500 3.500 9.500 6.500 7 9 4 6z', '#fff', 1.100) + ring(3.500, 4.500, 1.700, '#fff') + ln('M8 10.500h3M9.500 9v3M3 1v2', '#fff'), s2: ln('M1.500 4h9M1.500 6.500h9M1.500 9h9M3.500 2v9M6 2v9M8.500 2v9', '#d5d5d5', .9),
  s3: [2.500, 6, 9.500].map(x => [3, 6, 9].map(y => ci(x, y, .8, '#ccc')).join('')).join(''), s4: ln('M2.500 2v8.500h8M7 10.500V8', '#bbb'),
  s5: ring(5.500, 6.500, 3.800, '#fff') + ln('M5.500 6.500 11 2M5.500 6.500H11', '#fff'), s6: ln('M3.500 2v4M1.500 4h4', '#fff', 1.200) + fl('M4.500 7h6.500v2.500H4.500z', '#fff'), s7: ln('M1 2.500h10', W, .8) + ln('M1 5.500h10', W, 1.300) + ln('M1 9h10', W, 2),
  s8: fl('M2 2h8v8H2z', '#c9dcf1') + ln('M2 4h8M2 6h8M2 8h8M4 2v8M6 2v8M8 2v8', '#4a80bd', .5), s9: ln('M2 2h6v7H2zM4 2v7', '#fff', .9) + fl('M5 4l6 4-2.500.5L10 11 8.500 11.500 7.500 9 5.500 10z', '#fff'),
  s10: ln('M10 2 2.500 9.500H11', '#fff'), s11: ln('M3 3h7v7H3z', '#fff') + fl('M1.500 1.500h3V4.500h-3z', '#fff'), s12: comp + ci(9, 3, 1.600, '#fff'), s13: comp + ci(9.500, 3, 1.700, Y), s14: comp,
  s15: ln('M1.500 2h4v4h-4zM5 7.500h3v3H5z', '#ddd') + ring(9, 4, 2, '#ddd'),
  gear: ring(6, 6, 3, '#e8e8e8', 2.500) + ln('M6 0v2.500M6 9.500V12M0 6h2.500M9.500 6H12M1.800 1.800l1.700 1.700M8.500 8.500l1.700 1.700M10.200 1.800 8.500 3.500M3.500 8.500l-1.700 1.700', '#e8e8e8', 1.800),
  knob: ring(6, 6, 3.600, '#d6d6d6', 4) + ci(6, 6, 1.500, '#777')
};
document.querySelectorAll('section[data-title]').forEach(s => {
  const closed = 'closed' in s.dataset;
  const arrow = closed ? '<path d="M1 0v5l3-2.500z" fill="#ddd"/>' : '<path d="M0 .800h5L2.500 4.300z" fill="#ddd"/>';
  s.insertAdjacentHTML('afterbegin', `<div class="h-[11px] flex items-center border-t border-[#3e3e3e] pt-[1.500px] pl-[3px] pr-[3px] text-[#d6d6d6]"><svg class="size-[4px] mr-[2px]" viewBox="0 0 5 5">${arrow}</svg><span>${s.dataset.title}</span><svg data-i="knob" class="size-[5px] ml-auto" viewBox="0 0 12 12"></svg></div>`);
});

// property rows: label, value, kind
const rows = [['Color', 'ByLayer', 'color'], ['Layer', '0', ''], ['Linetype', 'ByLa...', 'line'], ['Linetype sc...', '1.000', 'input'], ['Lineweight', 'ByLayer', ''], ['Transparency', '0', 'slider'], ['Text style', 'Standard', ''], ['Dimension...', 'Standard', ''], ['Multileader...', 'Standard', ''], ['Table style', 'Standard', ''], ['Annotation...', '1:1', ''], ['Text height', '0.200', 'height'], ['Plot style', 'ByColor', ''], ['Plot style ta...', 'None', ''], ['Plot style at...', 'Model', 'off'], ['Plot table ty...', 'Not available', 'off']];
const caret = '<svg data-i="caret" class="ml-auto size-[4px] shrink-0" viewBox="0 0 12 12"></svg>';
document.getElementById('props').innerHTML = rows.map(([l, v, k]) => {
  let f;
  const val = `<span>${v}</span>`;
  if (k === 'color') f = `<div class="flex grow items-center h-[11px] bg-[#505050] border border-[#424242] px-[2px]"><span class="size-[6px] bg-white border border-black ml-[1px] mr-[5px]"></span>${val}${caret}</div>`;
  else if (k === 'line') f = `<div class="flex grow items-center h-[11px] bg-[#505050] border border-[#424242] px-[2px]"><span class="w-[18px] h-px bg-[#ccc] mr-[7px]"></span>${val}${caret}</div>`;
  else if (k === 'slider') f = `<div class="flex w-[36px] items-center justify-end h-[9px] bg-[#484848] border border-[#404040] border-l-[#4a80bd] px-[2px]">${val}</div><div class="flex grow items-center ml-[3px] h-[11px] bg-[#505050] px-[3px]"><svg class="size-[6px]" viewBox="0 0 12 12"><path d="M3 1h9L9 9H0z" fill="#5fb0ea"/><path d="M0 9.500h9l3-8V5L9 12H0z" fill="#ddd"/></svg>${caret}</div>`;
  else if (k === 'height') f = `<div class="flex w-[46px] items-center h-[10px] bg-[#474747] border border-[#404040] px-[1px] text-[6.100px]">${val}</div><svg class="size-[9px] ml-auto" viewBox="0 0 12 12" fill="none" stroke="#ccc"><path d="M1 1v10M1 3h10M11 1v4M8.500 6v5M6 8.500h5"/></svg>`;
  else if (k === 'input') f = `<div class="flex grow items-center h-[10px] bg-[#474747] border border-[#404040] px-[1px] text-[6.100px]">${val}</div>`;
  else if (k === 'off') f = `<div class="flex grow items-center h-[10px] border border-[#464646] px-[1px] font-normal text-[6px] text-[#7e7e7e]">${val}</div>`;
  else f = `<div class="flex grow items-center h-[11px] bg-[#505050] border border-[#424242] px-[2px]">${val}${caret}</div>`;
  return `<div class="h-[12.450px] flex items-center pr-[6px]"><span class="w-[56px] mr-[6px] text-right text-[6.100px] text-[#d4d4d4] whitespace-nowrap">${l}</span><div class="flex grow items-center font-bold text-[5.800px] text-[#f0f0f0]">${f}</div></div>`;
}).join('');

document.querySelectorAll('svg[data-i]').forEach(s => { s.innerHTML = icons[s.dataset.i] || ''; s.setAttribute('overflow', 'visible'); });

// outlines: each run of points is drawn as one smooth curve; two-point runs are straight
const outlines = [
  [[261,49,499,49],[499,49,499,193],[499,193,475,195,455,191,445,180,437,163,420,151,380,135,340,127,300,110,275,85,261,49]],
  [[519,37,747,37],[747,37,742,75,728,108,710,125,690,128,665,129,640,140,610,164,580,180,555,182,535,180,519,171],[519,171,519,37]],
  [[836,62,836,313],[836,313,527,313],[527,313,555,280,605,252,660,242,690,230,706,213,712,180,725,143,750,108],[750,108,790,86,836,62]],
  [[130,140,130,322],[130,322,412,322],[412,322,440,302,451,278,445,255,430,243,408,230,392,200,378,165,350,141,300,129,230,121,200,122,175,131,150,139,130,140]],
  [[22,342,255,342],[255,342,290,388,330,445,358,472,361,495,350,540,342,570,325,618,300,662,255,692,200,713,150,737,115,775,95,820,93,860,110,905,140,960,180,995,230,1013,300,1027,345,1042,364,1070,360,1095,335,1145,325,1175,325,1186],[325,1186,22,1186],[22,1186,22,342]],
  [[362,338,513,338],[513,338,513,598],[513,598,465,602,447,597,430,575,410,562,397,540,396,500,385,460,365,425,350,395,350,365,362,338]],
  [[557,342,842,342],[842,342,842,1186],[842,1186,613,1186],[613,1186,612,1160,595,1130,570,1090,556,1040,557,985,575,930,610,885,655,850,720,818,760,795,795,788,812,765,814,720,808,665,790,635,767,607,758,565,740,525,690,490,610,458,575,405,557,342]],
  [[339,630,519,630],[519,630,518,655,505,680,480,692,450,702,415,728,380,738,355,735,339,727],[339,727,339,630]],
  [[388,754,601,754],[601,754,601,883],[601,883,570,883,555,872,548,855,520,837,470,826,430,813,400,790,388,754]],
  [[403,899,544,899],[544,899,544,1020],[544,1020,530,1023,510,1012,495,980,480,967,435,947,410,925,403,899]]
];
const loops = [
  [625,532,680,538,725,560,750,595,758,628,748,668,700,715,635,733,575,712,540,670,531,640,535,600,550,565,580,540],
  [245,733,320,745,370,772,400,825,400,875,385,910,340,955,300,980,255,988,205,975,160,935,133,890,131,850,138,790,165,755,200,738],
  [455,1033,500,1038,540,1065,559,1100,550,1145,520,1178,465,1189,420,1175,382,1138,373,1100,382,1065,410,1042]
];
function smooth(a, closed) {
  const p = []; for (let i = 0; i < a.length; i += 2) p.push([a[i], a[i + 1]]);
  const n = p.length, at = i => closed ? p[(i + n) % n] : p[Math.max(0, Math.min(n - 1, i))];
  let d = `M${p[0]}`;
  for (let i = 0; i < (closed ? n : n - 1); i++) {
    const [a0, a1, a2, a3] = [at(i - 1), at(i), at(i + 1), at(i + 2)];
    d += `C${a1[0] + (a2[0] - a0[0]) / 6} ${a1[1] + (a2[1] - a0[1]) / 6} ${a2[0] - (a3[0] - a1[0]) / 6} ${a2[1] - (a3[1] - a1[1]) / 6} ${a2}`;
  }
  return d;
}
document.getElementById('drawing').innerHTML =
  outlines.map(o => `<path d="${o.map(r => smooth(r, false)).join('')}"/>`).join('') +
  loops.map(o => `<path d="${smooth(o, true)}"/>`).join('') +
  '<path d="M755 188a35 35 0 1 0 10 0v-13h-10zM714 414a35 35 0 1 1 0 9h-14v-9zM149 1105a35 35 0 1 0 0 10h14v-10z"/>' +
  '<path d="M554 656h63M629 656h61M623 587v63M623 662v63M617 650h12v12h-12z"/>';
</script>
</body>
</html>
